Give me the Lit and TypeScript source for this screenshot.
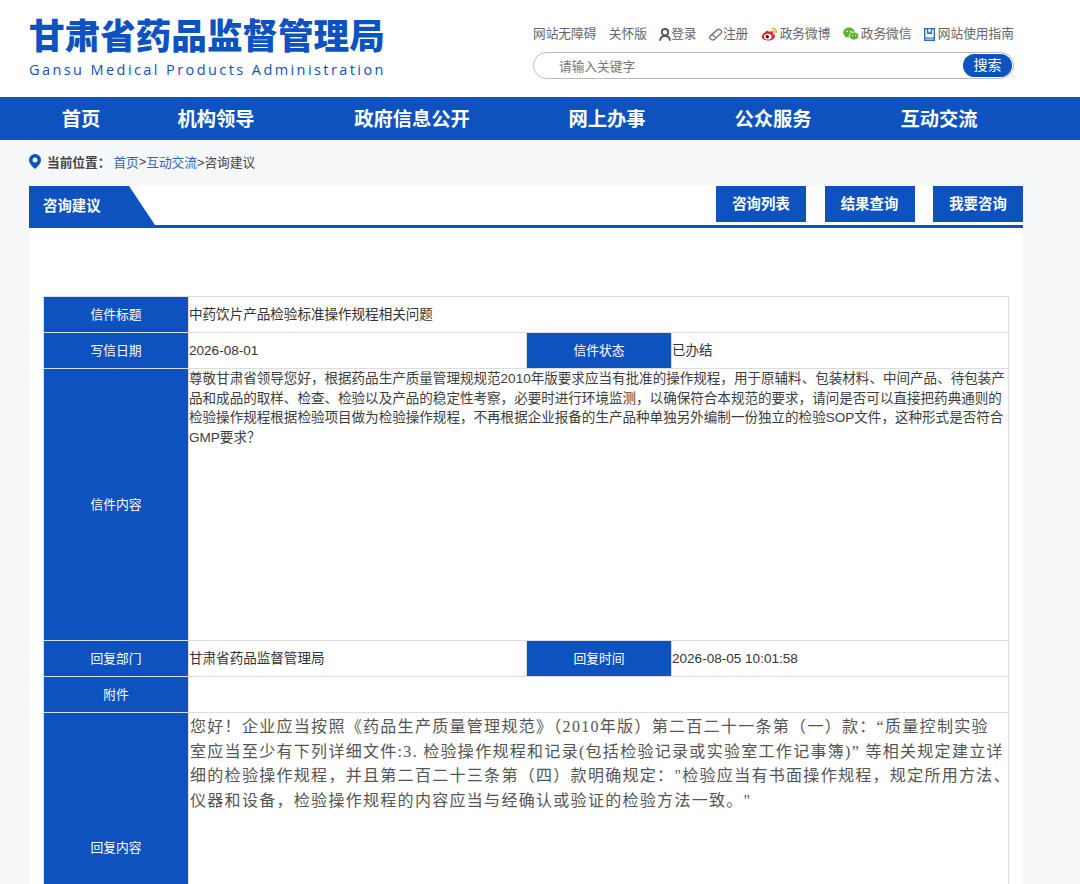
import { LitElement, html, css } from 'lit';
import { customElement } from 'lit/decorators.js';

const BLUE = css`#0d52bf`;

const NAV = ['首页', '机构领导', '政府信息公开', '网上办事', '公众服务', '互动交流'];
const TABS = ['咨询列表', '结果查询', '我要咨询'];

@customElement('app-root')
export class AppRoot extends LitElement {
  static styles = css`
    :host {
      display: block;
      height: 884px;
      overflow: hidden;
      background: #f6f7f9;
      font-family: "Liberation Sans", "Noto Sans CJK SC", sans-serif;
      color: #333;
    }
    .header {
      background: #fff;
      height: 97px;
      display: flex;
      justify-content: space-between;
      padding: 0 66px 0 29px;
    }
    .logo {
      padding-top: 12px;
      color: ${BLUE};
    }
    .logo-cn {
      font-family: "Noto Sans CJK SC", sans-serif;
      font-size: 35.6px;
      line-height: 44px;
      font-weight: 900;
      white-space: nowrap;
    }
    .logo-en {
      font-family: "Open Sans", sans-serif;
      font-size: 14.5px;
      line-height: 20px;
      letter-spacing: 2.42px;
      margin-top: 4px;
      white-space: nowrap;
    }
    .tools {
      width: 481px;
      padding-top: 25px;
    }
    .links {
      display: flex;
      justify-content: space-between;
      font-size: 12.7px;
      line-height: 18px;
      color: #666;
      white-space: nowrap;
    }
    .links span {
      display: flex;
      align-items: center;
    }
    .links svg {
      flex: none;
    }
    .search {
      margin-top: 9px;
      height: 27px;
      box-sizing: border-box;
      border: 1px solid #bbb;
      border-radius: 14px;
      display: flex;
      align-items: center;
      justify-content: space-between;
      padding: 0 1px 0 25px;
      font-size: 12.7px;
      color: #777;
    }
    .search b {
      width: 49px;
      height: 23px;
      border-radius: 12px;
      background: ${BLUE};
      color: #fff;
      font-size: 14px;
      font-weight: 400;
      line-height: 23px;
      text-align: center;
    }
    .nav {
      height: 43px;
      box-sizing: border-box;
      background: ${BLUE};
      padding: 0 0 1px 29px;
      display: grid;
      grid-template-columns: 104px 166px 226px 164px 168px 164px;
      align-items: center;
      justify-items: center;
      color: #fff;
      font-size: 19.3px;
      font-weight: 700;
    }
    .main {
      padding: 0 57px 0 29px;
    }
    .crumb {
      height: 46px;
      box-sizing: border-box;
      padding-bottom: 3px;
      display: flex;
      align-items: center;
      font-size: 12.7px;
      color: #444;
      white-space: nowrap;
    }
    .crumb svg {
      margin-right: 6px;
    }
    .crumb strong {
      margin-right: 3px;
    }
    .crumb a {
      color: #2a66bf;
    }
    .panel {
      background: #fff;
      height: 700px;
    }
    .tabbar {
      height: 42px;
      box-sizing: border-box;
      border-bottom: 3px solid ${BLUE};
      display: flex;
      justify-content: space-between;
    }
    .tab-title {
      width: 127px;
      height: 39px;
      box-sizing: border-box;
      padding-left: 14px;
      background: ${BLUE};
      clip-path: polygon(0 0, 100px 0, 126px 100%, 0 100%);
      color: #fff;
      font-size: 14.4px;
      font-weight: 700;
      line-height: 40px;
    }
    .tab-btns {
      display: flex;
      gap: 18.5px;
    }
    .tab-btns div {
      width: 90px;
      height: 36px;
      background: ${BLUE};
      color: #fff;
      font-size: 14.4px;
      font-weight: 700;
      line-height: 36px;
      text-align: center;
    }
    table {
      margin: 68px 0 0 14px;
      width: 966px;
      table-layout: fixed;
      border-collapse: collapse;
      font-size: 13.55px;
      line-height: 19.5px;
    }
    td {
      border: 1px solid #ddd;
      padding: 0;
      height: 35px;
      box-sizing: border-box;
    }
    td.label {
      background: ${BLUE};
      color: #fff;
      font-size: 12.8px;
      text-align: center;
    }
    td.top {
      vertical-align: top;
      color: #3d3d3d;
    }
    .letter {
      height: 272px;
    }
    .reply {
      height: 270px;
    }
    td.reply-text {
      font-family: "Liberation Serif", "Noto Sans CJK SC", serif;
      font-size: 16px;
      line-height: 24.6px;
      letter-spacing: 1.3px;
      color: #555;
      padding: 2px 0 0 1px;
      white-space: nowrap;
    }
  `;

  render() {
    return html`
      <div class="header">
        <div class="logo">
          <div class="logo-cn">甘肃省药品监督管理局</div>
          <div class="logo-en">Gansu Medical Products Administration</div>
        </div>
        <div class="tools">
          <div class="links">
            <span>网站无障碍</span>
            <span>关怀版</span>
            <span>
              <svg width="12" height="13" viewBox="0 0 12 13"><circle cx="6" cy="4.200" r="3.200" fill="none" stroke="#555" stroke-width="1.800"/><path d="M1 12.800C1.200 9.500 3.300 8 6 8s4.800 1.500 5 4.800" fill="none" stroke="#555" stroke-width="1.800"/></svg>登录
            </span>
            <span>
              <svg width="14" height="13" viewBox="0 0 15 13"><path d="M1 8.500 8.500 1.800c1-.9 2.800-1 4-.1s1.300 2.500.4 3.400L6 11.500c-1 .9-2.500 1-3.700.3S.3 9.300 1 8.500z" fill="#fff" stroke="#777" stroke-width="1.500"/><path d="M3.500 6.500l3.500 3.300" stroke="#777" stroke-width="1.300"/></svg>注册
            </span>
            <span>
              <svg width="17" height="14" viewBox="0 0 17 14" style="margin-right:2px"><path d="M7 3.500C3.500 5 .5 7.500.8 10c.3 2.500 3.500 3.700 6.700 3.500 3.500-.2 6.500-2 6.500-4.300 0-1.500-1.500-2-2.300-2.200.5-1.300.3-2.500-1-2.700-.9-.1-2 .3-2.700.7z" fill="#e0242b"/><ellipse cx="6.800" cy="9.700" rx="3.800" ry="2.900" fill="#fff"/><circle cx="6.300" cy="9.800" r="1.700" fill="#222"/><path d="M11.500 1.500c2.300-.4 4.300 1.500 3.800 4M11.800 3.700c1-.2 1.800.6 1.600 1.700" fill="none" stroke="#f0a020" stroke-width="1.200" stroke-linecap="round"/></svg>政务微博
            </span>
            <span>
              <svg width="16" height="14" viewBox="0 0 16 14" style="margin-right:2px"><ellipse cx="6" cy="5.500" rx="5.800" ry="4.900" fill="#5cb531"/><path d="M2.500 8.500 2 11l2.500-1.500z" fill="#5cb531"/><ellipse cx="11" cy="9" rx="4.800" ry="4" fill="#5cb531" stroke="#fff" stroke-width=".8"/><circle cx="4" cy="4.200" r=".8" fill="#fff"/><circle cx="8" cy="4.200" r=".8" fill="#fff"/><circle cx="9.500" cy="8.300" r=".6" fill="#fff"/><circle cx="12.500" cy="8.300" r=".6" fill="#fff"/></svg>政务微信
            </span>
            <span>
              <svg width="11" height="13" viewBox="0 0 11 13" style="margin-right:3px"><path d="M.7.700h9.600v11.600H.7z" fill="#fff" stroke="#2f6bc4" stroke-width="1.400"/><path d="M3 1h5v5H3z" fill="#2f6bc4"/><path d="M4.300 1h2.400v3.300H4.300z" fill="#fff"/><path d="M1 10h9" stroke="#2f6bc4" stroke-width="1.200"/></svg>网站使用指南
            </span>
          </div>
          <div class="search"><span>请输入关键字</span><b>搜索</b></div>
        </div>
      </div>
      <div class="nav">${NAV.map((n) => html`<div>${n}</div>`)}</div>
      <div class="main">
        <div class="crumb">
          <svg width="12" height="15" viewBox="0 0 12 15"><path fill-rule="evenodd" d="M6 0a6 6 0 0 1 6 6c0 3.500-3.500 6.800-6 9-2.500-2.200-6-5.500-6-9a6 6 0 0 1 6-6zm0 3.500a2.500 2.500 0 1 0 0 5 2.500 2.500 0 0 0 0-5z" fill="#0d52bf"/></svg>
          <strong>当前位置：</strong><a>首页</a>&gt;<a>互动交流</a>&gt;咨询建议
        </div>
        <div class="panel">
          <div class="tabbar">
            <div class="tab-title">咨询建议</div>
            <div class="tab-btns">${TABS.map((t) => html`<div>${t}</div>`)}</div>
          </div>
          <table>
            <colgroup><col style="width:145px" /><col style="width:338px" /><col style="width:145px" /><col /></colgroup>
            <tr style="height:36px"><td class="label">信件标题</td><td colspan="3">中药饮片产品检验标准操作规程相关问题</td></tr>
            <tr style="height:36px"><td class="label">写信日期</td><td>2026-08-01</td><td class="label">信件状态</td><td>已办结</td></tr>
            <tr class="letter">
              <td class="label">信件内容</td>
              <td class="top" colspan="3">尊敬甘肃省领导您好，根据药品生产质量管理规规范2010年版要求应当有批准的操作规程，用于原辅料、包装材料、中间产品、待包装产品和成品的取样、检查、检验以及产品的稳定性考察，必要时进行环境监测，以确保符合本规范的要求，请问是否可以直接把药典通则的检验操作规程根据检验项目做为检验操作规程，不再根据企业报备的生产品种单独另外编制一份独立的检验SOP文件，这种形式是否符合GMP要求？</td>
            </tr>
            <tr style="height:36px"><td class="label">回复部门</td><td>甘肃省药品监督管理局</td><td class="label">回复时间</td><td>2026-08-05 10:01:58</td></tr>
            <tr style="height:36px"><td class="label">附件</td><td colspan="3"></td></tr>
            <tr class="reply">
              <td class="label">回复内容</td>
              <td class="top reply-text" colspan="3">您好！企业应当按照《药品生产质量管理规范》（2010年版）第二百二十一条第（一）款：“质量控制实验<br />室应当至少有下列详细文件:3. 检验操作规程和记录(包括检验记录或实验室工作记事簿)” 等相关规定建立详<br />细的检验操作规程，并且第二百二十三条第（四）款明确规定："检验应当有书面操作规程，规定所用方法、<br />仪器和设备，检验操作规程的内容应当与经确认或验证的检验方法一致。"</td>
            </tr>
          </table>
        </div>
      </div>
    `;
  }
}
